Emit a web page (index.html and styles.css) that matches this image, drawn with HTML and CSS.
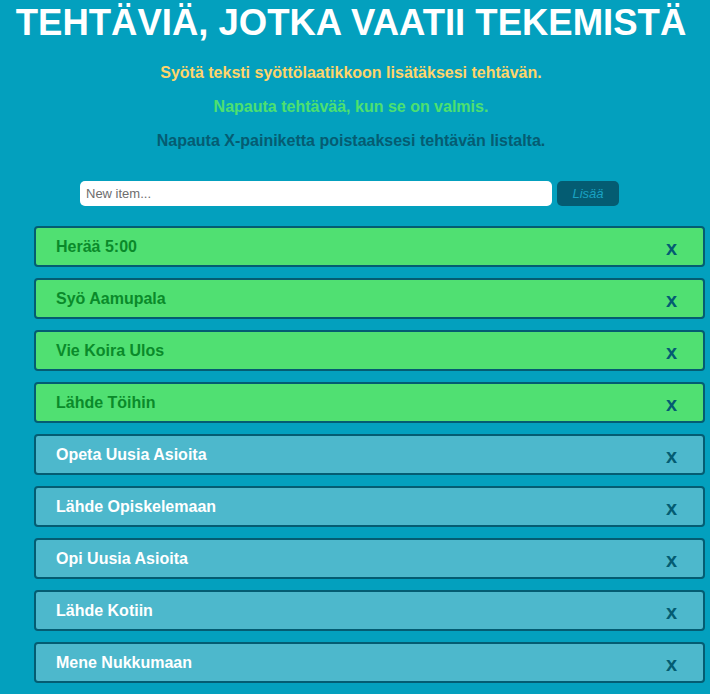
FILE: index.html
```
<!DOCTYPE html>
<html lang="fi">
<head>
<meta charset="utf-8">
<title>Tehtävät</title>
<link rel="stylesheet" href="styles.css">
</head>
<body>
<header class="head">
  <h1 class="title">TEHTÄVIÄ, JOTKA VAATII TEKEMISTÄ</h1>
  <p class="hint hint-add">Syötä teksti syöttölaatikkoon lisätäksesi tehtävän.</p>
  <p class="hint hint-done">Napauta tehtävää, kun se on valmis.</p>
  <p class="hint hint-del">Napauta X-painiketta poistaaksesi tehtävän listalta.</p>
  <form class="add-form">
    <input class="add-input" type="text" placeholder="New item...">
    <button class="add-btn" type="button">Lisää</button>
  </form>
</header>
<ul class="list">
  <li class="item done"><span>Herää 5:00</span><span class="close">x</span></li>
  <li class="item done"><span>Syö Aamupala</span><span class="close">x</span></li>
  <li class="item done"><span>Vie Koira Ulos</span><span class="close">x</span></li>
  <li class="item done"><span>Lähde Töihin</span><span class="close">x</span></li>
  <li class="item"><span>Opeta Uusia Asioita</span><span class="close">x</span></li>
  <li class="item"><span>Lähde Opiskelemaan</span><span class="close">x</span></li>
  <li class="item"><span>Opi Uusia Asioita</span><span class="close">x</span></li>
  <li class="item"><span>Lähde Kotiin</span><span class="close">x</span></li>
  <li class="item"><span>Mene Nukkumaan</span><span class="close">x</span></li>
</ul>
</body>
</html>
```
FILE: styles.css
```
html, body {
  margin: 0;
  padding: 0;
}
body {
  background: #03a0be;
  font-family: "Liberation Sans", Arial, sans-serif;
  overflow: hidden;
}
.head {
  width: 702px;
}
.title {
  margin: 0;
  padding-top: 3px;
  font-size: 36.5px;
  line-height: 40px;
  color: #ffffff;
  text-align: center;
  font-weight: bold;
  white-space: nowrap;
}
.hint {
  margin: 0;
  font-size: 16px;
  line-height: 18px;
  font-weight: bold;
  text-align: center;
}
.hint-add {
  margin-top: 21px;
  color: #ffd46a;
}
.hint-done {
  margin-top: 16px;
  color: #4de070;
}
.hint-del {
  margin-top: 16px;
  color: #055c72;
}
.add-form {
  display: flex;
  justify-content: center;
  gap: 5px;
  margin: 31px 0 0;
  padding-right: 3px;
}
.add-input {
  box-sizing: border-box;
  width: 472px;
  height: 25px;
  border: none;
  border-radius: 5px;
  padding: 0 6px;
  font-family: "Liberation Sans", Arial, sans-serif;
  font-size: 13px;
  background: #ffffff;
  outline: none;
}
.add-input::placeholder {
  color: #6d6d6d;
}
.add-btn {
  width: 62px;
  height: 25px;
  border: none;
  border-radius: 5px;
  background: #045c72;
  color: #1aa3c3;
  font-family: "Liberation Sans", Arial, sans-serif;
  font-style: italic;
  font-size: 13px;
  padding: 0;
}
.list {
  list-style: none;
  margin: 20px 0 0 34px;
  padding: 0;
  display: flex;
  flex-direction: column;
  gap: 11px;
}
.item {
  box-sizing: border-box;
  width: 671px;
  height: 41px;
  border: 2px solid #045c72;
  border-radius: 4px;
  background: #4db8cc;
  color: #ffffff;
  font-size: 16px;
  font-weight: bold;
  display: flex;
  align-items: center;
  justify-content: space-between;
  padding: 0 26px 0 20px;
}
.item.done {
  background: #50e072;
  color: #0a8a2a;
}
.close {
  color: #045c72;
  font-size: 20px;
  font-weight: bold;
  padding-top: 4px;
}
```
